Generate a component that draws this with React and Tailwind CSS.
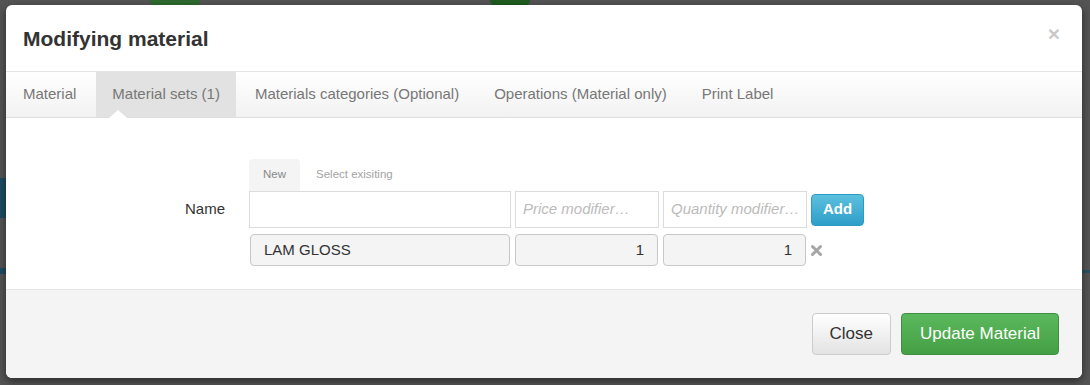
import React from 'react';

const tabs = [
  { label: 'Material' },
  { label: 'Material sets (1)', active: true },
  { label: 'Materials categories (Optional)' },
  { label: 'Operations (Material only)' },
  { label: 'Print Label' },
];

const RemoveIcon = () => (
  <svg width="13" height="13" viewBox="0 0 13 13" className="shrink-0">
    <path d="M2.5 2.5 L10.5 10.5 M10.5 2.5 L2.5 10.5" stroke="#a6a6a6" strokeWidth="3" strokeLinecap="round" />
  </svg>
);

const App = () => {
  return (
    <div
      className="relative w-[1090px] h-[385px] overflow-hidden bg-[#545454]"
      style={{ fontFamily: '"Liberation Sans", Arial, sans-serif' }}
    >
      {/* faint page behind the backdrop */}
      <div className="absolute left-[0px] top-[178px] w-[6px] h-[40px] bg-[#1f4b63]" />
      <div className="absolute left-[0px] top-[268px] w-[6px] h-[6px] bg-[#1f4b63]" />
      <div className="absolute left-[1082px] top-[270px] w-[8px] h-[3px] bg-[#2a4f66]" />
      <div className="absolute left-[150px] top-[0px] w-[50px] h-[6px] rounded-b-full bg-[#2e6b2e]" />
      <div className="absolute left-[490px] top-[0px] w-[40px] h-[6px] rounded-b-full bg-[#1f5c1f]" />

      <div className="relative ml-[6px] mt-[5px] w-[1076px] h-[373px] rounded-[6px] bg-white overflow-hidden flex flex-col shadow-[0_3px_9px_rgba(0,0,0,0.5)]">
        {/* header */}
        <div className="h-[67px] shrink-0 flex items-center justify-between pl-[17px] pr-[22px] border-b border-[#e5e5e5]">
          <h4 className="text-[21px] font-bold text-[#333] leading-none">Modifying material</h4>
          <span className="text-[21px] font-bold text-[#c9c9c9] leading-none -mt-[10px]">×</span>
        </div>

        {/* tabs */}
        <div className="relative h-[46px] shrink-0 flex pl-px gap-[3px] bg-gradient-to-b from-white to-[#f2f2f2] border-b border-[#dedede]">
          {tabs.map((t, i) => (
            <div
              key={t.label}
              className={`relative flex items-center text-[15px] text-[#777] ${i === 0 ? 'pl-4 pr-[17px]' : 'px-4'} ${t.active ? 'bg-[#e2e2e2]' : ''}`}
            >
              {t.label}
              {t.active && (
                <span className="absolute left-[13px] bottom-[-1px] w-0 h-0 border-l-[9px] border-r-[9px] border-b-[8px] border-l-transparent border-r-transparent border-b-white" />
              )}
            </div>
          ))}
        </div>

        {/* body */}
        <div className="h-[171px] shrink-0 flex pt-[41px]">
          <div className="w-[219px] shrink-0 pt-[32px]">
            <div className="h-[37px] flex items-center justify-end text-[15px] text-[#333]">Name</div>
          </div>
          <div className="ml-[24px] flex flex-col">
            <div className="h-[32px] flex text-[11.5px]">
              <div className="px-[14px] flex items-center rounded-t-[4px] bg-[#f4f4f4] text-[#888]">New</div>
              <div className="px-4 flex items-center text-[#a3a3a3]">Select exisiting</div>
            </div>
            <div className="h-[37px] flex items-center">
              <div className="w-[262px] h-[37px] border border-[#dcdcdc]" />
              <div className="ml-[4px] w-[144px] h-[37px] border border-[#dcdcdc] flex items-center px-[7px] text-[15px] italic text-[#bbb] whitespace-nowrap overflow-hidden">
                Price modifier…
              </div>
              <div className="ml-[4px] w-[144px] h-[37px] border border-[#dcdcdc] flex items-center px-[7px] text-[15px] italic text-[#bbb] whitespace-nowrap overflow-hidden">
                Quantity modifier…
              </div>
              <button className="ml-[4px] w-[53px] h-[32px] rounded-[4px] border border-[#2a9cc4] bg-gradient-to-b from-[#5bc0de] to-[#2d9ec9] text-white text-[15px] font-bold">
                Add
              </button>
            </div>
            <div className="mt-[6px] h-[32px] flex items-center">
              <div className="ml-px w-[260px] h-[32px] rounded-[4px] border border-[#c8c8c8] bg-[#f4f4f4] flex items-center px-[13px] text-[15px] text-[#333]">
                LAM GLOSS
              </div>
              <div className="ml-[5px] w-[143px] h-[32px] rounded-[4px] border border-[#c8c8c8] bg-[#f4f4f4] flex items-center justify-end px-[13px] text-[15px] text-[#333]">
                1
              </div>
              <div className="ml-[5px] w-[143px] h-[32px] rounded-[4px] border border-[#c8c8c8] bg-[#f4f4f4] flex items-center justify-end px-[13px] text-[15px] text-[#333]">
                1
              </div>
              <div className="ml-[4px]">
                <RemoveIcon />
              </div>
            </div>
          </div>
        </div>

        {/* footer */}
        <div className="flex-1 flex items-center justify-end gap-[10px] pr-[23px] bg-[#f4f4f4] border-t border-[#e5e5e5]">
          <button className="h-[42px] px-[17px] rounded-[4px] border border-[#cccccc] bg-gradient-to-b from-white to-[#e3e3e3] text-[17px] text-[#333]">
            Close
          </button>
          <button className="h-[42px] px-[18px] rounded-[4px] border border-[#3e8f3e] bg-gradient-to-b from-[#5cb85c] to-[#45a045] text-[17px] text-white">
            Update Material
          </button>
        </div>
      </div>
    </div>
  );
};

export default App;
